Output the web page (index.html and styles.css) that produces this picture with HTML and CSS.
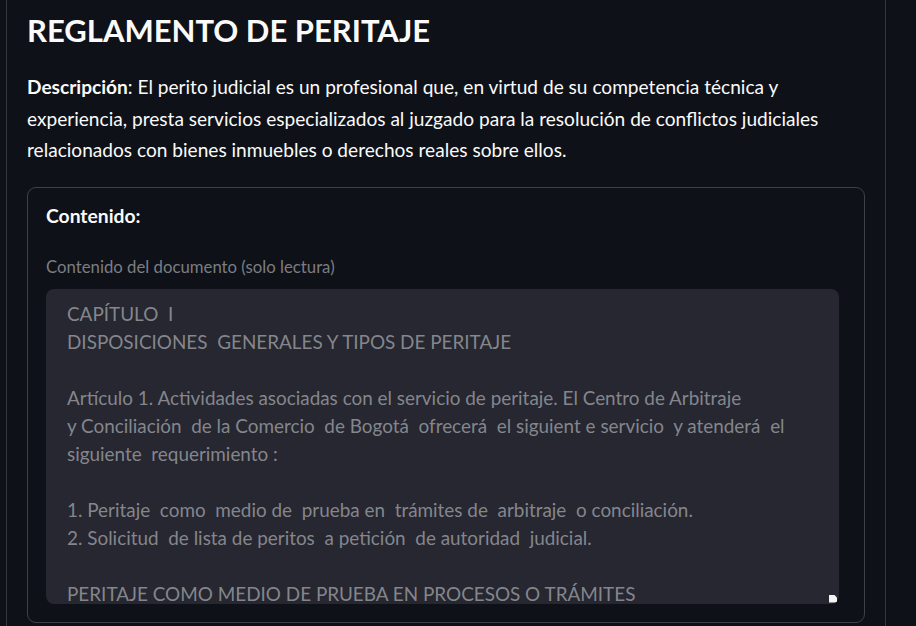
FILE: index.html
```html
<!DOCTYPE html>
<html lang="es">
<head>
<meta charset="utf-8">
<title>Reglamento de peritaje</title>
<link rel="stylesheet" href="styles.css">
</head>
<body>
<main class="outer">
  <h2 class="title">REGLAMENTO DE PERITAJE</h2>
  <p class="desc"><strong>Descripción</strong>: El perito judicial es un profesional que, en virtud de su competencia técnica y<br>experiencia, presta servicios especializados al juzgado para la resolución de conflictos judiciales<br>relacionados con bienes inmuebles o derechos reales sobre ellos.</p>
  <section class="card">
    <p class="card-head">Contenido:</p>
    <label class="label">Contenido del documento (solo lectura)</label>
    <div class="area">
      <div class="area-text">CAPÍTULO  I
DISPOSICIONES  GENERALES Y TIPOS DE PERITAJE

Artículo 1. Actividades asociadas con el servicio de peritaje. El Centro de Arbitraje
y Conciliación  de la Comercio  de Bogotá  ofrecerá  el siguient e servicio  y atenderá  el
siguiente  requerimiento :

1. Peritaje  como  medio de  prueba en  trámites de  arbitraje  o conciliación.
2. Solicitud  de lista de peritos  a petición  de autoridad  judicial.

PERITAJE COMO MEDIO DE PRUEBA EN PROCESOS O TRÁMITES

Artículo 2. Definición. El peritaje es un medio de prueba.</div>
      <span class="grip"></span>
    </div>
  </section>
</main>
</body>
</html>
```
FILE: styles.css
```css
html, body {
  margin: 0;
  padding: 0;
  background: #0e1117;
  height: 100%;
  overflow: hidden;
}
body {
  font-family: "Lato", "Open Sans", sans-serif;
  color: #fafafa;
}
.outer {
  margin-left: 6px;
  width: 838px;
  height: 100%;
  border-left: 1px solid #34373d;
  border-right: 1px solid #34373d;
  padding: 0 20px;
}
.title {
  margin: 0;
  padding-top: 10px;
  font-size: 31px;
  line-height: 40px;
  font-weight: 700;
  letter-spacing: 0;
}
.desc {
  margin: 21px 0 0;
  font-size: 19.1px;
  line-height: 31.5px;
  color: #fafafa;
  white-space: nowrap;
}
.desc strong { font-weight: 700; }
.card {
  margin-top: 21px;
  border: 1px solid #3d4045;
  border-radius: 9px;
  padding: 12px 25px 18px 18px;
}
.card-head {
  margin: 0;
  font-size: 19.3px;
  line-height: 32px;
  font-weight: 700;
}
.label {
  display: block;
  margin-top: 21px;
  font-size: 16.75px;
  line-height: 28px;
  color: #7b7d83;
}
.area {
  position: relative;
  margin-top: 8px;
  height: 315px;
  background: #262730;
  border-radius: 8px;
  overflow: hidden;
}
.area-text {
  white-space: pre;
  padding: 11px 21px 10px;
  font-size: 18.9px;
  line-height: 28px;
  color: #84868c;
}
.grip {
  position: absolute;
  right: 2px;
  bottom: 1px;
  width: 8px;
  height: 8px;
  background: #f4f4f4;
  clip-path: polygon(0 0, 5px 0, 8px 3px, 8px 8px, 0 8px);
}
```
